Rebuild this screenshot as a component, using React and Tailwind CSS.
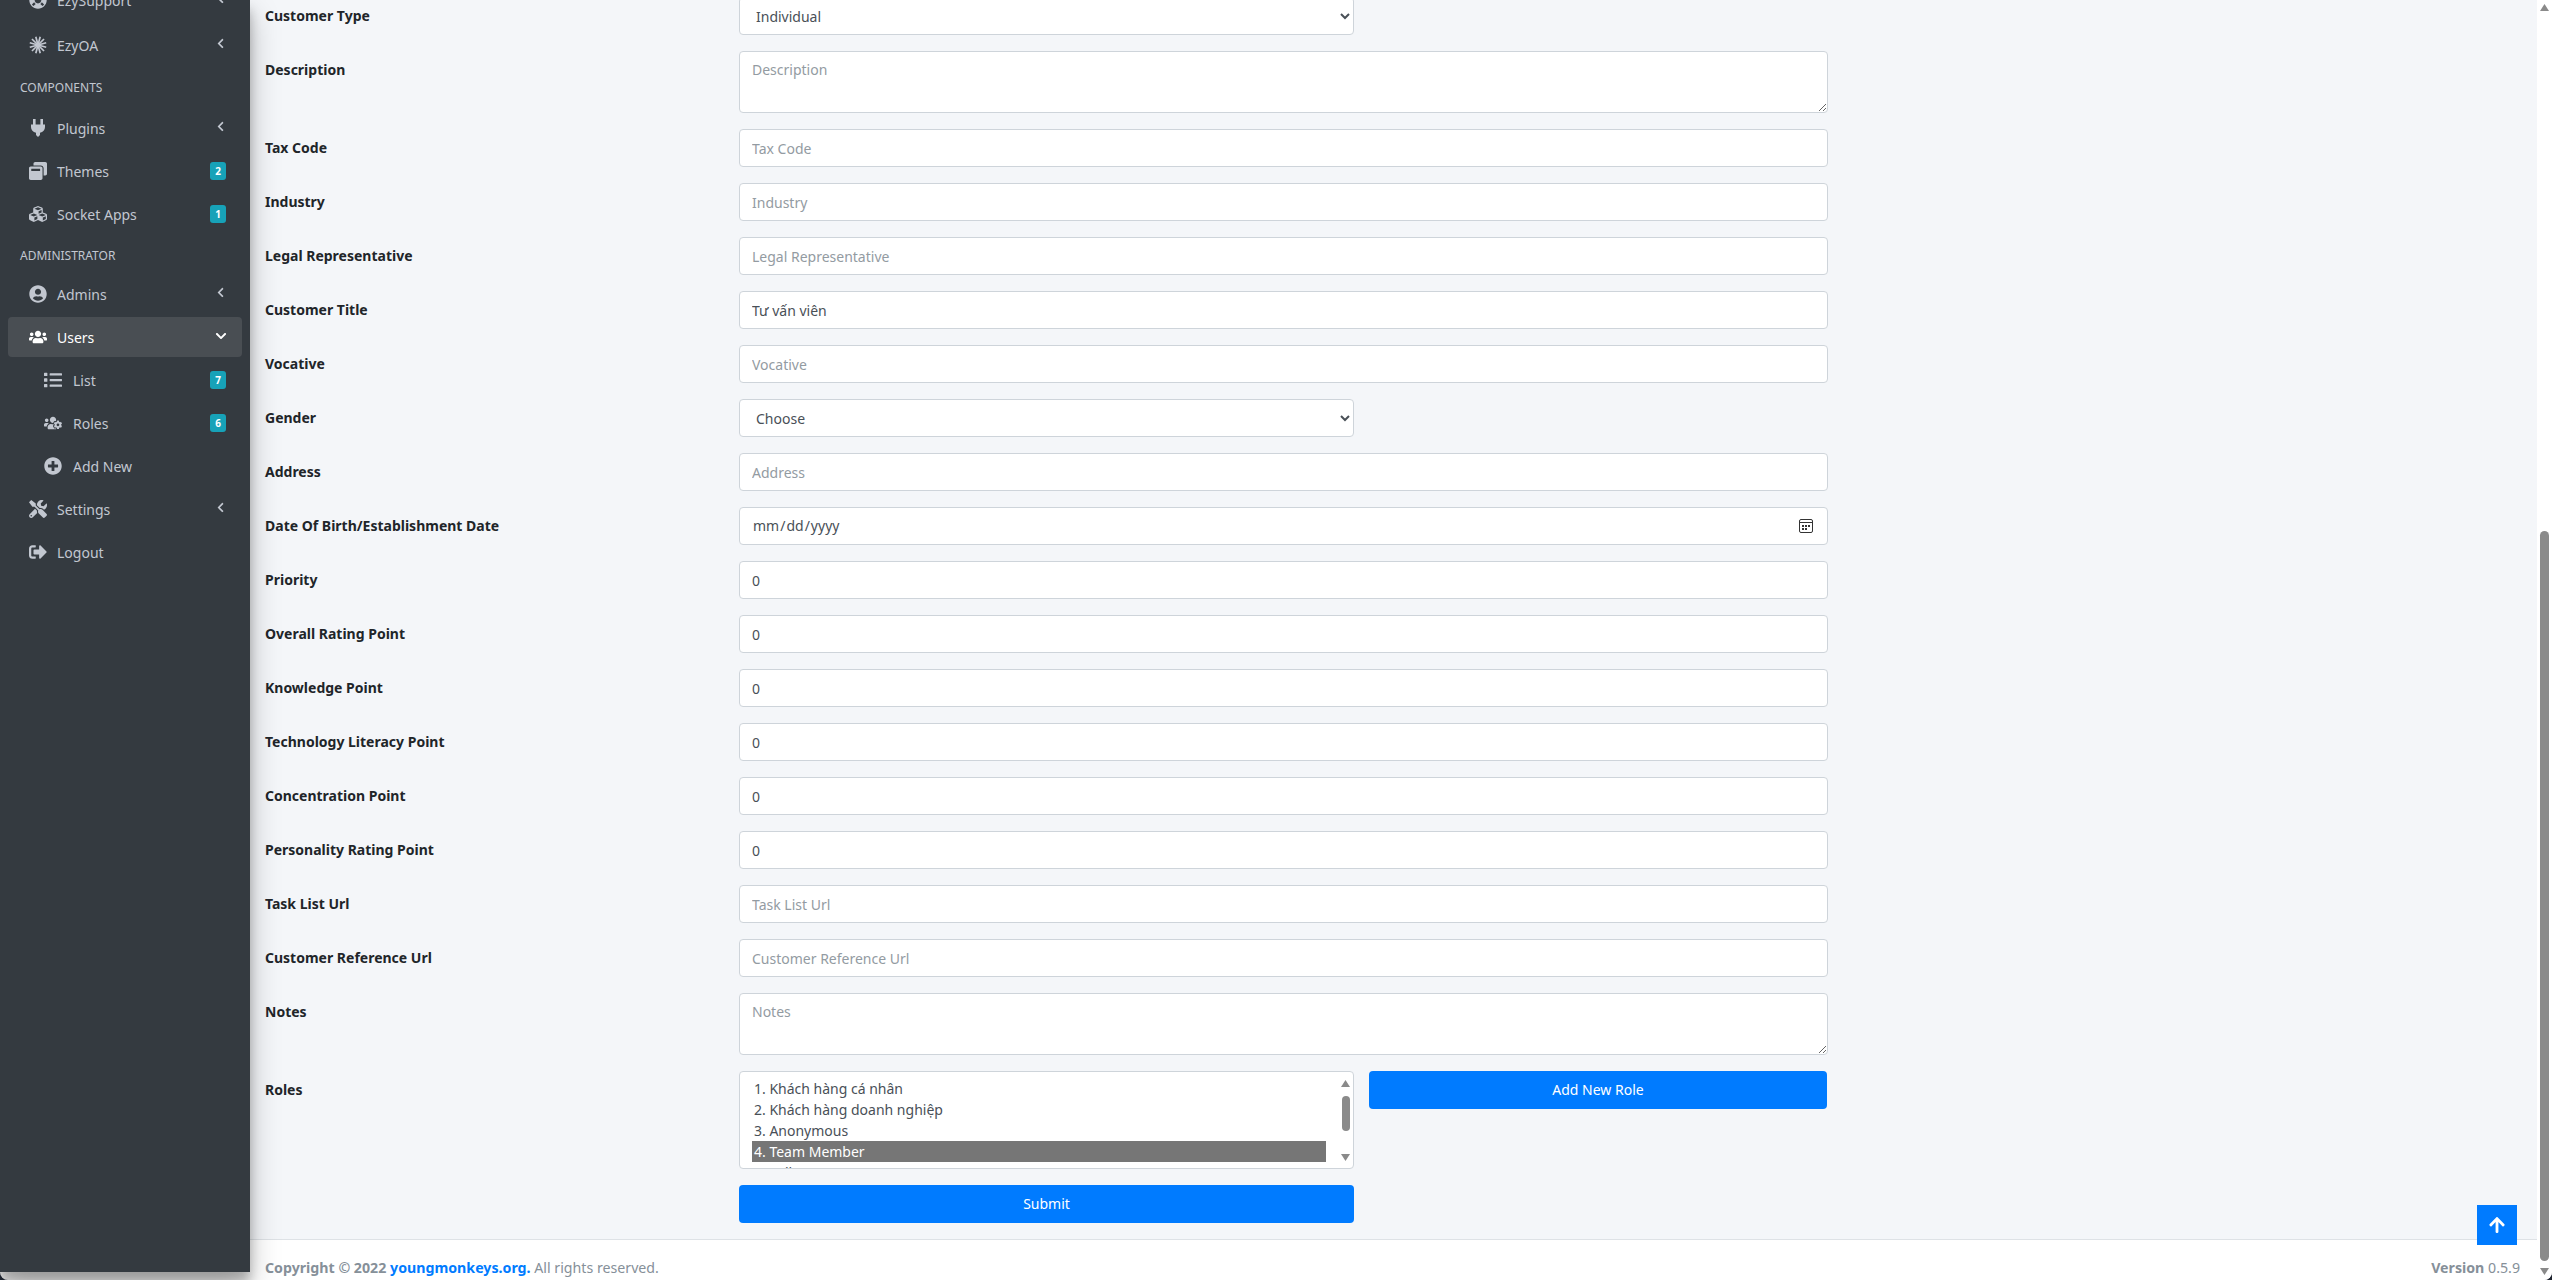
import React from "react";
import { FaChevronLeft, FaChevronDown, FaWindowRestore, FaCubes, FaUserCircle, FaUsers, FaList, FaUsersCog, FaPlusCircle, FaTools, FaSignOutAlt, FaLifeRing, FaArrowUp } from "react-icons/fa";

const font = "font-['Noto_Sans',sans-serif]";

const rows = [
  { label: "Description", kind: "area", placeholder: "Description" },
  { label: "Tax Code", placeholder: "Tax Code" },
  { label: "Industry", placeholder: "Industry" },
  { label: "Legal Representative", placeholder: "Legal Representative" },
  { label: "Customer Title", value: "Tư vấn viên" },
  { label: "Vocative", placeholder: "Vocative" },
  { label: "Gender", kind: "select", value: "Choose" },
  { label: "Address", placeholder: "Address" },
  { label: "Date Of Birth/Establishment Date", kind: "date" },
  { label: "Priority", value: "0" },
  { label: "Overall Rating Point", value: "0" },
  { label: "Knowledge Point", value: "0" },
  { label: "Technology Literacy Point", value: "0" },
  { label: "Concentration Point", value: "0" },
  { label: "Personality Rating Point", value: "0" },
  { label: "Task List Url", placeholder: "Task List Url" },
  { label: "Customer Reference Url", placeholder: "Customer Reference Url" },
  { label: "Notes", kind: "area", placeholder: "Notes" },
];

const roles = ["1. Khách hàng cá nhân", "2. Khách hàng doanh nghiệp", "3. Anonymous", "4. Team Member", "5. Seller"];

// burst icon used by the EzyOA entry
const BurstIcon = ({ className }) => (
  <svg viewBox="0 0 18 18" width="18" height="18" className={className} stroke="currentColor" strokeWidth="1.7">
    {[0, 30, 60, 90, 120, 150, 180, 210, 240, 270, 300, 330].map((a) => (
      <line key={a} x1="9" y1="9" x2="9" y2="0.5" transform={`rotate(${a + 15} 9 9)`} />
    ))}
  </svg>
);

const PlugIcon = ({ className }) => (
  <svg viewBox="0 0 14 18" width="14" height="18" className={className} fill="currentColor">
    <rect x="2" y="0" width="2.6" height="6" />
    <rect x="9.4" y="0" width="2.6" height="6" />
    <path d="M0 5.5h14v2.5c0 3-2 5.2-5 5.7V16l-2 2-2-2v-2.300C2 13.200 0 11 0 8z" />
  </svg>
);

const CalendarIcon = () => (
  <svg viewBox="0 0 14 14" width="14" height="14" fill="none" className="absolute right-[15px] top-[12px] pointer-events-none text-[#333]">
    <rect x="0.5" y="0.5" width="13" height="13" rx="1.5" stroke="currentColor" />
    <path d="M1 3.500h12" stroke="currentColor" />
    <path d="M3 6h2v2H3zM6 6h2v2H6zM9 6h2v2H9zM3 9h2v2H3zM6 9h2v2H6z" fill="currentColor" />
  </svg>
);

const Triangle = ({ down }) => (
  <svg viewBox="0 0 9 7" width="9" height="7" className="text-[#8a8a8a]" fill="currentColor">
    <path d={down ? "M0 0h9L4.500 7z" : "M4.500 0L9 7H0z"} />
  </svg>
);

const NavItem = ({ icon: Icon, label, badge, arrow, active, sub, first }) => (
  <div className={`flex items-center h-[40px] rounded-[4px] ${first ? "mb-[5px]" : "mb-[3px]"} ${active ? "bg-[#494e53] text-white" : "text-[#c2c7d0]"}`}>
    <span className={`flex justify-center w-[28px] ${sub ? "ml-[31px]" : "ml-[16px]"}`}>
      <Icon className="text-[18px]" />
    </span>
    <span className={`text-[14px] flex-1 ${sub ? "ml-[6px]" : "ml-[5px]"}`}>{label}</span>
    {badge && <span className="bg-[#17a2b8] text-white text-[10px] font-bold rounded-[3px] w-[16px] h-[18px] mr-[16px] flex items-center justify-center">{badge}</span>}
    {arrow && <FaChevronLeft className="text-[11px] mr-[16px] -mt-[3px]" />}
    {active && <FaChevronDown className="text-[12px] mr-[15px] -mt-[2px] text-white" />}
  </div>
);

const Field = ({ row }) => {
  const base = "w-full bg-white border border-[#ced4da] rounded-[4px] text-[14px] leading-[24px] text-[#495057] placeholder:text-[#939ba2] outline-none";
  if (row.kind === "area") return <textarea readOnly placeholder={row.placeholder} className={`${base} h-[62px] block px-[12px] py-[6px]`} />;
  if (row.kind === "select") return (
    <div className="w-[615px]">
      <select className={`${base} h-[38px] px-[12px]`} defaultValue={row.value}><option>{row.value}</option></select>
    </div>
  );
  if (row.kind === "date") return (
    <div className="relative">
      <input type="date" className={`${base} h-[38px] px-[12px] [&::-webkit-calendar-picker-indicator]:opacity-0`} />
      <CalendarIcon />
    </div>
  );
  return <input readOnly value={row.value} placeholder={row.placeholder} className={`${base} h-[38px] px-[12px]`} />;
};

export default function App() {
  return (
    <div className={`h-[1280px] w-[2552px] bg-[#1f2530] ${font}`}>
      <div className="flex h-full overflow-hidden bg-white rounded-b-[8px]">
        {/* Sidebar */}
        <aside className="w-[250px] h-[1272px] shrink-0 bg-[#343a40] shadow-[0_14px_28px_rgba(0,0,0,0.25),0_10px_10px_rgba(0,0,0,0.22)] z-10 overflow-hidden px-[8px]">
          <div className="-mt-[20px]">
            <NavItem icon={FaLifeRing} label="EzySupport" arrow first />
            <NavItem icon={BurstIcon} label="EzyOA" arrow />
            <div className="text-[#c2c7d0] text-[12px] h-[40px] flex items-center pl-[12px]">COMPONENTS</div>
            <NavItem icon={PlugIcon} label="Plugins" arrow />
            <NavItem icon={FaWindowRestore} label="Themes" badge="2" />
            <NavItem icon={FaCubes} label="Socket Apps" badge="1" />
            <div className="text-[#c2c7d0] text-[12px] h-[37px] flex items-center pl-[12px]">ADMINISTRATOR</div>
            <NavItem icon={FaUserCircle} label="Admins" arrow />
            <NavItem icon={FaUsers} label="Users" active />
            <NavItem icon={FaList} label="List" badge="7" sub />
            <NavItem icon={FaUsersCog} label="Roles" badge="6" sub />
            <NavItem icon={FaPlusCircle} label="Add New" sub />
            <NavItem icon={FaTools} label="Settings" arrow />
            <NavItem icon={FaSignOutAlt} label="Logout" />
          </div>
        </aside>

        {/* Main */}
        <main className="flex-1 flex flex-col min-w-0 relative">
          <div className="h-[1239px] bg-[#f4f6f9] overflow-hidden pl-[15px]">
            <div className="w-[1563px] -mt-[3px] flex flex-col gap-[16px] text-[14px] leading-[24px] text-[#212529]">
              <div className="flex">
                <label className="w-[474px] font-bold pt-[7px]">Customer Type</label>
                <div className="flex-1">
                  <div className="w-[615px]">
                    <select className="w-full bg-white border border-[#ced4da] rounded-[4px] h-[38px] px-[12px] text-[#495057] outline-none"><option>Individual</option></select>
                  </div>
                </div>
              </div>
              {rows.map((r) => (
                <div className="flex" key={r.label}>
                  <label className="w-[474px] font-bold pt-[7px]">{r.label}</label>
                  <div className="flex-1"><Field row={r} /></div>
                </div>
              ))}
              <div className="flex">
                <label className="w-[474px] font-bold pt-[7px]">Roles</label>
                <div className="flex-1 flex gap-[15px]">
                  <div className="w-[615px] h-[98px] bg-white border border-[#ced4da] rounded-[4px] overflow-hidden flex pl-[12px] pt-[6px] text-[#495057]">
                    <div className="w-[574px] leading-[21px] shrink-0">
                      {roles.map((role) => (
                        <div key={role} className={`px-[2px] h-[21px] ${role.startsWith("4.") ? "bg-[#767676] text-white" : ""}`}>{role}</div>
                      ))}
                    </div>
                    <div className="w-[15px] ml-[12px] shrink-0 flex flex-col items-center pt-[2px]">
                      <Triangle />
                      <span className="w-[8px] h-[35px] rounded-full bg-[#8a8a8a] mt-[9px] shrink-0" />
                      <span className="mt-[23px]"><Triangle down /></span>
                    </div>
                  </div>
                  <button className="w-[458px] h-[38px] bg-[#007bff] text-white rounded-[4px]">Add New Role</button>
                </div>
              </div>
              <div className="flex">
                <div className="w-[474px]" />
                <button className="w-[615px] h-[38px] bg-[#007bff] text-white rounded-[4px]">Submit</button>
              </div>
            </div>
          </div>
          <footer className="h-[41px] border-t border-[#dee2e6] flex justify-between items-center pl-[15px] pr-[17px] pt-[16px] text-[14.2px] text-[#869099]">
            <div><b>Copyright © 2022 <span className="text-[#007bff]">youngmonkeys.org.</span></b> All rights reserved.</div>
            <div><b>Version</b> 0.5.9</div>
          </footer>
          {/* back to top */}
          <button className="absolute right-[20px] bottom-[35px] w-[40px] h-[40px] bg-[#007bff] text-white flex items-center justify-center"><FaArrowUp className="text-[18px]" /></button>
        </main>

        {/* Page scrollbar */}
        <div className="w-[15px] shrink-0 bg-white flex flex-col items-center pt-[4px] pb-[5px]">
          <Triangle />
          <div className="w-[9px] mt-[520px] flex-1 rounded-full bg-[#8a8a8a]" />
          <div className="mt-[7px]"><Triangle down /></div>
        </div>
      </div>
    </div>
  );
}
